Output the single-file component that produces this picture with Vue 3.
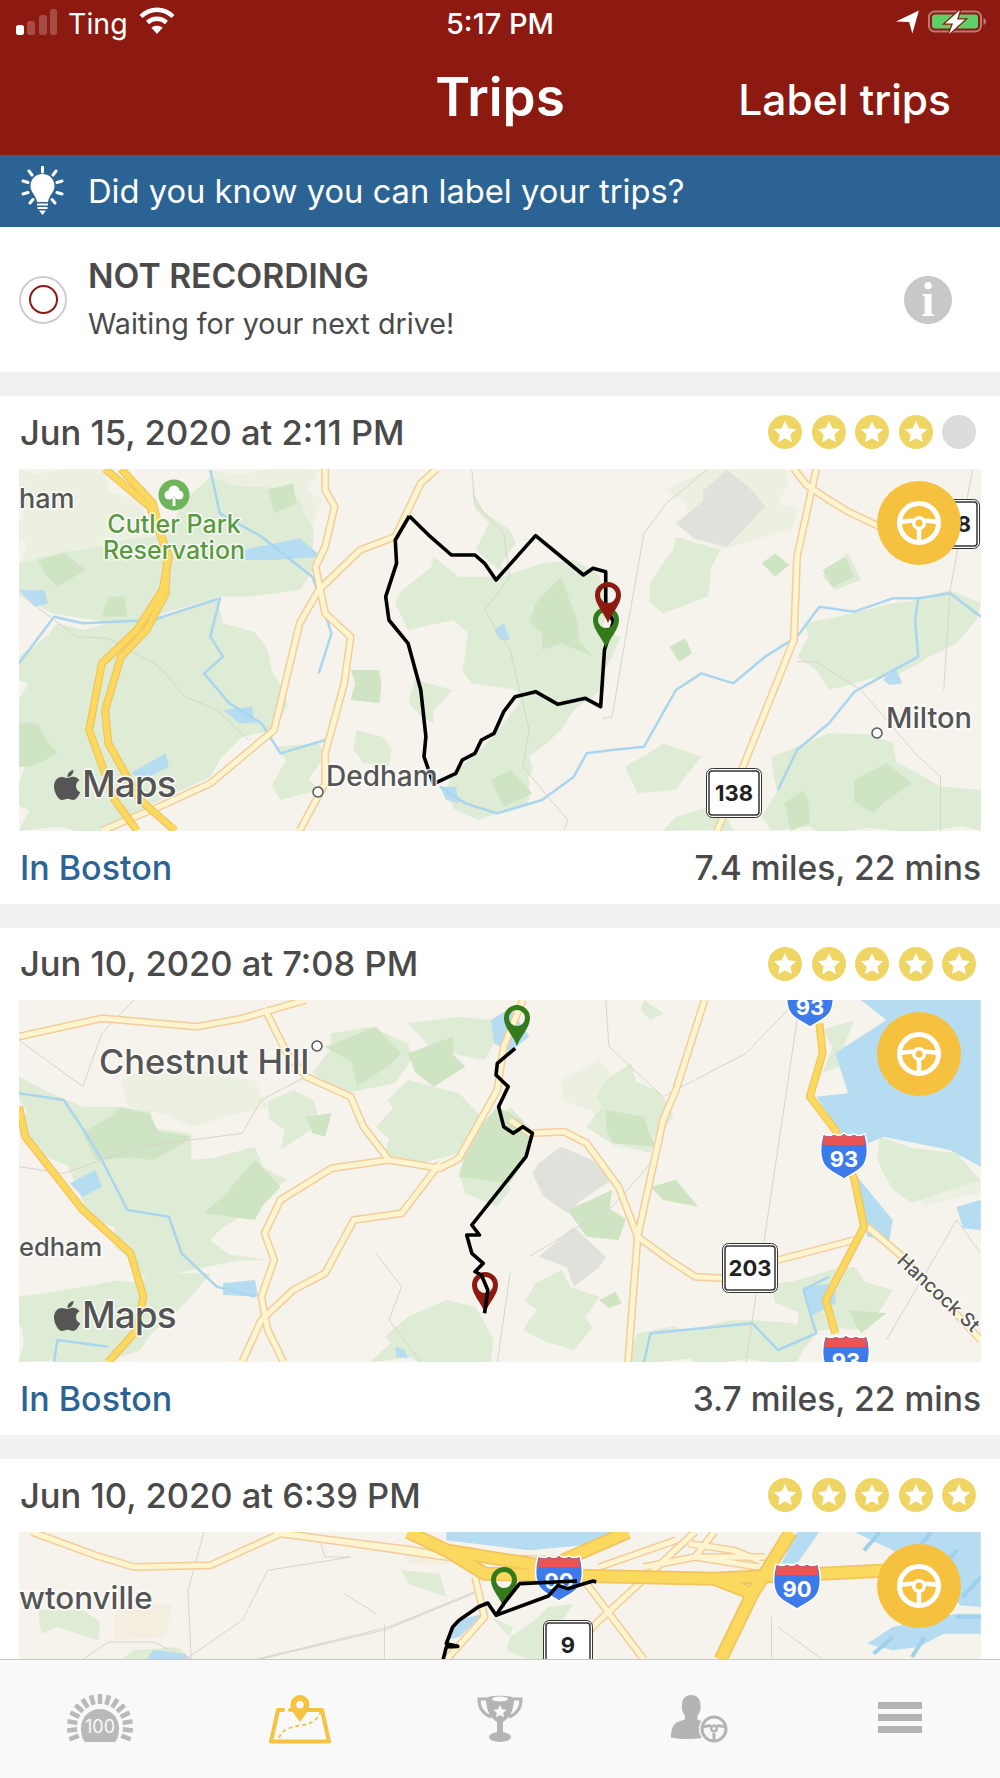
<script setup>
const gaugeRays = Array.from({ length: 15 }, (_, i) => {
  const a = ((-112 + i * 16) * Math.PI) / 180
  return {
    x1: 34 + 23 * Math.sin(a),
    y1: 33 - 23 * Math.cos(a),
    x2: 34 + 33 * Math.sin(a),
    y2: 33 - 33 * Math.cos(a)
  }
})

// map shapes are noted in crop units (x 30-1538), the svg group scales them down
const trips = [
  {
    date: 'Jun 15, 2020 at 2:11 PM',
    stars: 4,
    stats: '7.4 miles, 22 mins',
    map: {
      baseY: 237,
      pale: [
        '30,237 165,237 230,400 240,440 130,480 30,520',
        '330,240 500,240 490,440 400,420 360,340',
        '1040,300 1110,237 1230,237 1240,420 1130,480'
      ],
      green: [
        '30,800 90,700 130,720 190,690 250,680 340,620 350,700 420,780 445,900 430,1020 380,1040 330,1160 230,1250 180,1322 30,1322',
        '30,520 130,480 240,440 330,260 470,330 490,480 470,600 340,620 240,680 150,690 80,670 30,610',
        '620,640 680,500 720,560 790,560 850,520 900,510 950,620 960,800 950,890 900,960 880,1020 830,1100 830,1240 750,1290 700,1200 740,1100 790,1000 810,900 740,880 730,790 710,690 640,720',
        '1210,1100 1300,1030 1400,1060 1440,1150 1538,1200 1538,1322 1210,1322',
        '1020,580 1060,440 1130,480 1110,620 1040,670',
        '1260,700 1400,640 1490,600 1538,640 1500,760 1400,860 1300,900 1250,800',
        '560,1020 600,1040 610,1130 570,1120',
        '750,1170 800,1130 830,1230 770,1250',
        '740,300 800,420 800,560 770,520',
        '650,870 710,900 680,1000 660,980',
        '1290,560 1330,490 1350,570 1310,600',
        '980,1130 1040,1060 1100,1100 1060,1200 1000,1210',
        '430,1070 500,1060 500,1200 440,1230',
        '1060,1280 1130,1240 1150,1322 1040,1322'
      ],
      deep: [
        '840,640 880,560 895,640 930,800 880,760 850,780',
        '1050,770 1075,745 1085,790 1065,815',
        '1195,520 1215,490 1238,525 1215,560',
        '30,1000 60,1000 90,1090 50,1130 30,1130',
        '550,840 595,840 595,940 550,930',
        '60,510 100,490 135,540 90,590 70,550',
        '420,300 460,280 465,340 430,370',
        '170,620 195,620 200,680 160,680',
        '770,1170 800,1140 835,1210 790,1250',
        '1340,1170 1390,1120 1430,1180 1370,1270',
        '1230,1240 1260,1200 1270,1300 1240,1322',
        '1290,540 1325,500 1340,560 1305,590'
      ],
      gray: ['1060,400 1140,240 1200,350 1140,470'],
      water: [
        '380,480 470,445 505,500 430,510 385,510',
        '775,720 790,700 800,750 785,750',
        '690,1190 715,1190 720,1240 700,1230',
        '1385,870 1405,835 1415,880 1395,885',
        '350,960 395,950 400,1000 375,1000',
        '205,1150 260,1090 265,1130 225,1170',
        '30,600 70,600 75,640 55,650'
      ],
      rivers: [
        '1538,680 1490,610 1440,625 1400,625 1340,665 1285,650 1250,740 1200,800 1150,880 1100,850 1060,900 1010,1070 960,1080 920,1090 900,1160 850,1230 780,1270 730,1240 690,1190',
        '30,820 85,680 130,700 240,690 345,625 330,740 350,800 320,850 360,940 410,1000 440,1090 510,1050',
        '330,240 345,370 410,440 490,560 520,730 500,850',
        '1440,625 1435,690 1440,800 1340,905 1300,1000 1250,1080 1220,1200'
      ],
      minor: [
        '740,240 745,340 790,430 800,560 760,660 800,780 830,1020 820,1130 890,1290 885,1322',
        '1110,237 1045,340 1010,430 985,700 960,980 945,985',
        '30,610 120,740 170,745 250,830 290,920 340,960 390,1050',
        '1250,815 1280,815 1350,900 1440,1100 1475,1160 1475,1322',
        '1525,240 1490,600 1480,900'
      ],
      arterial: [
        '685,237 660,280 620,440 565,480 500,600 470,700 430,1020 330,1180 250,1250 160,1322',
        '510,237 510,300 525,350 510,470 495,530 510,670 550,740 540,880 510,1090 510,1180 470,1322',
        '1245,237 1265,285 1300,330 1330,365 1380,410',
        '1280,237 1250,500 1245,750 1180,1060 1125,1322'
      ],
      highway: [
        '165,237 235,350 265,500 255,600 215,720 160,820 140,1020 180,1230 215,1322',
        '190,237 240,340 262,500 260,610 230,720 190,800 165,960 170,1060 220,1230 275,1322'
      ],
      route: '642,378 675,440 708,495 745,495 760,520 778,570 840,437 915,555 930,535 950,545 950,650 962,695 948,780 942,950 918,925 875,943 840,905 808,920 790,965 775,1030 755,1050 745,1090 725,1110 715,1150 680,1182 665,1100 668,1040 660,900 640,760 610,690 605,620 622,520 620,450 642,378'
    },
    labels: [
      { text: 'ham', x: 0, y: 39, size: 27 },
      { text: 'Dedham', x: 307, y: 317, size: 28 },
      { text: 'Milton', x: 867, y: 259, size: 29 }
    ],
    parks: [
      { text: 'Cutler Park', x: 155, y: 64 },
      { text: 'Reservation', x: 155, y: 90 }
    ],
    tree: true,
    dots: [{ x: 299, y: 323 }, { x: 858, y: 264 }],
    boxes: [
      { text: '138', x: 687, y: 299 },
      { text: '138', x: 905, y: 30 }
    ],
    interstates: [],
    pins: [
      { x: 587, y: 138, color: '#337a1c' },
      { x: 589, y: 113, color: '#8c1a10' }
    ]
  },
  {
    date: 'Jun 10, 2020 at 7:08 PM',
    stars: 5,
    stats: '3.7 miles, 22 mins',
    map: {
      baseY: 240,
      pale: [
        '190,480 240,440 400,480 420,560 300,620 200,560',
        '880,480 940,420 1000,560 1030,700 960,680',
        '1440,760 1538,780 1538,820 1450,860'
      ],
      green: [
        '30,470 130,560 180,560 300,640 300,720 400,680 450,780 330,960 420,1020 300,1050 230,1080 180,980 120,800 60,700 30,640',
        '520,340 580,320 640,370 620,490 540,520 490,460',
        '590,620 640,480 720,520 760,600 720,700 640,740 600,720',
        '720,760 800,560 840,640 820,720 780,860 730,820',
        '950,480 990,430 1050,560 1020,700 950,660 920,620',
        '30,1130 130,1100 270,1060 330,1060 280,1170 220,1290 170,1326 30,1326',
        '580,1326 640,1190 700,1140 760,1210 770,1326',
        '840,1090 880,1050 940,1130 900,1290 820,1230',
        '1210,1090 1340,1040 1400,1110 1360,1230 1250,1240',
        '1000,1240 1180,1200 1280,1240 1250,1326 980,1326',
        '1380,650 1500,700 1538,780 1430,850 1385,760',
        '640,310 720,290 770,300 760,420 680,390',
        '420,545 460,510 500,600 440,690',
        '1010,240 1040,280 1020,300 1005,270',
        '1290,330 1340,300 1340,420 1290,460'
      ],
      deep: [
        '130,640 190,560 300,650 240,720 150,720',
        '320,880 400,720 440,800 400,900',
        '1020,800 1060,780 1095,860 1040,840',
        '940,1140 965,1115 975,1150 955,1165',
        '640,400 710,350 730,440 680,500',
        '510,380 590,320 630,400 560,500',
        '480,590 520,580 510,650 490,640',
        '890,870 960,810 970,960 920,950',
        '950,570 1010,590 1030,680 960,670',
        '730,700 780,560 830,660 800,790 720,770',
        '1330,1170 1390,1180 1350,1240'
      ],
      gray: [
        '835,760 880,680 960,780 890,880',
        '845,1010 900,920 950,1010 900,1100'
      ],
      water: [
        '1350,240 1538,240 1538,740 1490,690 1385,650 1350,680 1340,760 1370,830 1400,900 1395,960 1360,950 1340,790 1320,640 1280,530 1330,520 1310,400 1390,300',
        '770,300 800,265 830,350 800,395 775,370',
        '110,790 150,750 160,800 130,830',
        '1500,860 1538,840 1538,930 1510,925',
        '620,1280 635,1290 640,1315 622,1310',
        '350,1090 400,1080 405,1130 350,1125',
        '1260,1100 1310,1090 1310,1150 1270,1190'
      ],
      rivers: [
        '30,520 100,540 135,640 160,720 200,870 265,890 285,1000 340,1100 400,1130',
        '1010,1326 1020,1240 1180,1210 1220,1290 1280,1240 1260,1110 1300,1070',
        '85,1326 90,1260 170,1280'
      ],
      minor: [
        '30,360 130,500 160,340 210,240',
        '590,1000 630,1100 610,1200 660,1326',
        '950,240 955,380 1040,530 1170,400 1240,260',
        '830,1010 960,860 1030,710',
        '1250,300 1170,1326',
        '800,1060 780,1326',
        '1390,1260 1500,900 1538,1000',
        '30,740 100,760 220,680 300,660 380,640 410,540 480,470'
      ],
      arterial: [
        '30,350 160,295 310,320 380,295 480,240',
        '415,265 450,400 480,470 550,530 570,620 610,720 690,745 720,715 780,510 790,380 820,240',
        '610,720 520,745 440,840 415,940 430,1020 410,1130 420,1230 445,1326',
        '690,730 630,880 555,900 510,1060 460,1110 410,1200 380,1326',
        '800,600 830,640 885,635 920,670 970,800 1000,950 1050,1020 1090,1070 1135,1075',
        '1220,1020 1340,960',
        '1105,240 1060,510 1040,600 1000,950 985,1326',
        '1360,920 1415,1010 1538,1260'
      ],
      highway: [
        '30,560 40,650 130,870 205,1000 225,1130 215,1230 170,1326',
        '1285,310 1290,400 1270,530 1310,630 1340,780 1355,920 1295,1140 1310,1240'
      ],
      route: '808,385 780,430 778,465 797,500 782,560 790,620 805,640 820,620 835,640 825,710 740,915 752,945 732,945 740,1000 758,1030 745,1055 755,1065 765,1110 760,1180'
    },
    labels: [
      { text: 'Chestnut Hill', x: 80, y: 74, size: 34.400 },
      { text: 'edham', x: 0, y: 256, size: 25.500 }
    ],
    parks: [],
    dots: [{ x: 298, y: 46 }],
    boxes: [{ text: '203', x: 703, y: 243 }],
    interstates: [
      { text: '93', x: 791, y: -22 },
      { text: '93', x: 825, y: 130 },
      { text: '93', x: 827, y: 332 }
    ],
    pins: [
      { x: 498, y: 5, color: '#337a1c' },
      { x: 466, y: 272, color: '#8c1a10' }
    ],
    street: true,
    routeOnTop: true
  },
  {
    date: 'Jun 10, 2020 at 6:39 PM',
    stars: 5,
    stats: '',
    map: {
      baseY: 245,
      wide: true,
      sand: ['180,470 270,460 260,560 180,570', '630,300 720,320 700,345 640,340'],
      green: [
        '60,480 130,480 155,570 90,530 65,550',
        '630,360 690,370 700,440 640,400',
        '770,500 800,560 860,470 900,460 870,628 830,628',
        '210,600 280,590 300,628 190,628'
      ],
      water: [
        '700,245 985,245 940,280 830,300 700,270',
        '1250,245 1285,245 1250,340 1225,340',
        '1340,245 1538,245 1538,470 1505,465 1490,420 1440,360 1400,300',
        '1500,490 1538,490 1538,550 1480,550 1440,590 1400,600 1360,580 1400,530',
        '715,510 760,490 720,560 700,570',
        '240,600 290,610 300,628 230,628'
      ],
      docks: [
        '1355,300 1380,245',
        '1420,340 1460,245',
        '1470,380 1500,300',
        '1510,440 1538,380',
        '1400,560 1370,610',
        '1450,560 1430,620',
        '1500,500 1538,500'
      ],
      rivers: [],
      minor: [
        '320,245 295,420 300,628',
        '500,260 510,320 550,320 420,360 380,510 290,628',
        '750,420 610,530 400,628',
        '745,428 605,538 395,632',
        '540,430 590,490',
        '130,628 170,575 240,575 300,628',
        '603,520 603,628',
        '1210,500 1210,628 1290,628 1220,530'
      ],
      arterial: [
        '50,245 150,315 210,350 330,345 440,250 650,300 760,340',
        '430,245 700,320 900,330',
        '745,380 760,500 700,628',
        '920,400 1010,628',
        '1090,245 940,510 880,628',
        '1010,350 1090,320 1200,320',
        '1120,245 1090,320 1190,350',
        '1080,280 1150,300 1190,330',
        '940,350 1060,270'
      ],
      highway: [
        '640,245 700,300 860,350 985,245',
        '700,300 760,370 1120,385 1180,430 1130,628',
        '1120,385 1400,360',
        '1240,245 1180,430'
      ],
      route: '695,628 700,590 718,588 700,580 710,530 720,510 750,470 765,458 778,495 860,437 875,405 890,415 930,392 935,395',
      route2: '778,495 790,460 815,400 905,392'
    },
    labels: [{ text: 'wtonville', x: 0, y: 77, size: 31.300 }],
    parks: [],
    dots: [],
    boxes: [{ text: '9', x: 524, y: 88, narrow: true }],
    interstates: [
      { text: '90', x: 540, y: 20 },
      { text: '90', x: 778, y: 28 }
    ],
    pins: [{ x: 485, y: 35, color: '#337a1c' }],
    routeOnTop: true
  }
]

function scaleFor(map) {
  return `scale(0.63776 0.33333) translate(-30 ${-map.baseY})`
}

// breaks long polygon edges so the parks get the jagged look of the map tiles
function rough(points) {
  const pts = points.split(' ').map((p) => p.split(',').map(Number))
  const out = []
  pts.forEach((a, i) => {
    const b = pts[(i + 1) % pts.length]
    out.push(a)
    const steps = Math.floor(Math.hypot(b[0] - a[0], b[1] - a[1]) / 45)
    for (let s = 1; s < steps; s++) {
      const t = s / steps
      const wobble = Math.sin(a[0] * 0.7 + a[1] * 1.3 + s * 2.4)
      out.push([a[0] + (b[0] - a[0]) * t + wobble * 16, a[1] + (b[1] - a[1]) * t - wobble * 14])
    }
  })
  return out.map((p) => p.join(',')).join(' ')
}
</script>

<template>
  <div class="phone">
    <header class="topbar">
      <div class="status">
        <div class="status-left">
          <svg class="signal" width="44" height="28" viewBox="0 0 44 28">
            <rect x="0" y="16" width="8" height="10" rx="2.5" fill="#fff" />
            <rect x="11" y="12" width="8" height="14" rx="2.5" fill="#fff" opacity="0.22" />
            <rect x="23" y="6" width="8" height="20" rx="2.5" fill="#fff" opacity="0.22" />
            <rect x="34" y="0" width="7" height="26" rx="2.5" fill="#fff" opacity="0.22" />
          </svg>
          <span class="carrier">Ting</span>
          <svg class="wifi" width="38" height="27" viewBox="0 0 38 27" fill="none" stroke="#fff" stroke-width="4.4">
            <path d="M3 9.5C12.5 0.5 25.5 0.5 35 9.5" />
            <path d="M9.5 15.5C15 10.5 23 10.5 28.5 15.5" />
            <path d="M19 27l-5.6-6.2c3.2-2.6 8-2.6 11.2 0z" fill="#fff" stroke="none" />
          </svg>
        </div>
        <span class="clock">5:17 PM</span>
        <div class="status-right">
          <svg width="24" height="24" viewBox="0 0 22 22"><path d="M0 10.5L21 0.5 15 21.5 12 11z" fill="#fff" /></svg>
          <svg width="60" height="24" viewBox="0 0 60 24">
            <rect x="1" y="1.5" width="52" height="20" rx="5.5" fill="none" stroke="#fff" stroke-opacity="0.42" stroke-width="2" />
            <rect x="4" y="4.5" width="46" height="14" rx="3" fill="#5fd068" />
            <path d="M55.5 8v7c1.6-.6 2.6-2 2.6-3.5S57.100 8.600 55.500 8z" fill="#fff" fill-opacity="0.42" />
            <path d="M32 0L17 13.500h8L21 24 37 9.500h-8z" fill="#fff" stroke="#8c1a10" stroke-width="2.500" paint-order="stroke" />
          </svg>
        </div>
      </div>
      <div class="navbar">
        <h1 class="title">Trips</h1>
        <span class="nav-action">Label trips</span>
      </div>
    </header>

    <div class="tip">
      <svg class="bulb" width="44" height="50" viewBox="0 0 44 50">
        <g stroke="#fff" stroke-width="3" stroke-linecap="round">
          <path d="M21.500 1v5M8 5l3 4M35 5l-3 4M2 15l5 1.500M41 15l-5 1.500M2 28l5-1.500M41 28l-5-1.500M9 37l3-3.500M34 37l-3-3.500" />
        </g>
        <path d="M21.500 8C14.500 8 9.500 13.500 9.500 20c0 6.500 5.500 9 6.500 16h11c1-7 6.500-9.500 6.500-16 0-6.500-5-12-12-12z" fill="#fff" />
        <path d="M16 38.500h11M16.500 42h10" stroke="#fff" stroke-width="2.200" />
        <path d="M18 44.500h7L21.500 49z" fill="#fff" />
      </svg>
      <span>Did you know you can label your trips?</span>
    </div>

    <section class="recording">
      <div class="radio"><div class="radio-dot"></div></div>
      <div class="recording-text">
        <div class="recording-title">NOT RECORDING</div>
        <div class="recording-sub">Waiting for your next drive!</div>
      </div>
      <div class="info">i</div>
    </section>

    <main class="trip-list">
      <article v-for="trip in trips" :key="trip.date" class="trip">
        <div class="trip-head">
          <span class="trip-date">{{ trip.date }}</span>
          <div class="stars">
            <span v-for="n in 5" :key="n" class="star" :class="{ off: n > trip.stars }">
              <svg v-if="n <= trip.stars" width="24" height="24" viewBox="0 0 24 24">
                <path d="M12 1l3.300 7.300 7.900.9-5.900 5.300 1.600 7.800-6.900-4-6.900 4 1.600-7.800L.8 9.200l7.900-.9z" fill="#fff" />
              </svg>
            </span>
          </div>
        </div>

        <div class="map">
          <svg class="map-art" width="962" height="362" viewBox="0 0 962 362">
            <g :transform="scaleFor(trip.map)" :class="{ wide: trip.map.wide }">
              <polygon v-for="p in trip.map.sand" :key="p" :points="p" fill="#f3eee0" />
              <polygon v-for="p in trip.map.pale" :key="p" :points="rough(p)" fill="#ebf0e0" />
              <polygon v-for="p in trip.map.green" :key="p" :points="rough(p)" fill="#deebd5" />
              <polygon v-for="p in trip.map.deep" :key="p" :points="rough(p)" fill="#cfe4c3" />
              <polygon v-for="p in trip.map.gray" :key="p" :points="rough(p)" fill="#dfe1da" />
              <polygon v-for="p in trip.map.water" :key="p" :points="p" fill="#b5dcf0" />
              <polyline v-for="p in trip.map.docks" :key="p" :points="p" class="line dock" />
              <polyline v-for="p in trip.map.rivers" :key="p" :points="p" class="line river" />
              <polyline v-for="p in trip.map.minor" :key="p" :points="p" class="line minor" />
              <polyline v-for="p in trip.map.arterial" :key="p" :points="p" class="line art-case" />
              <polyline v-for="p in trip.map.arterial" :key="p + 'f'" :points="p" class="line art-fill" />
              <polyline v-for="p in trip.map.highway" :key="p" :points="p" class="line hw-case" />
              <polyline v-for="p in trip.map.highway" :key="p + 'f'" :points="p" class="line hw-fill" />
              <polyline v-if="!trip.routeOnTop" :points="trip.map.route" class="line route" />
            </g>

            <g v-for="s in trip.interstates" :key="s.x" :transform="`translate(${s.x - 24} ${s.y})`">
              <path d="M3 4c4 2 8 2 11 0 4 2 7 2 10-1 3 3 6 3 10 1 3 2 7 2 11 0 3 10 4 24-2 32-5 6-13 9-19 13-6-4-14-7-19-13C-1 28 0 14 3 4z" fill="#3d7bea" stroke="#fff" stroke-width="1.500" />
              <path d="M4 5c4 2 7 2 10 0 4 2 7 2 10-1 3 3 6 3 10 1 3 2 6 2 10 0l1.500 10H2.500z" fill="#ea5454" />
              <text x="24" y="37" class="shield-text">{{ s.text }}</text>
            </g>

            <g v-for="b in trip.boxes" :key="b.x" :transform="`translate(${b.x} ${b.y})`">
              <rect x="0.500" y="0.500" :width="b.narrow ? 49 : 55" height="49" rx="6" fill="#fff" stroke="#333" stroke-width="1" />
              <rect x="3" y="3" :width="b.narrow ? 44 : 50" height="44" rx="3" fill="#fff" stroke="#333" stroke-width="1.500" />
              <text :x="b.narrow ? 25 : 28" y="33" class="box-text">{{ b.text }}</text>
            </g>

            <g v-if="trip.tree" transform="translate(155 26)">
              <ellipse rx="15.500" ry="15.500" fill="#6fb45b" />
              <circle cy="-4" r="5.500" fill="#fff" />
              <circle cx="-5" cy="0" r="4.500" fill="#fff" />
              <circle cx="5" cy="0" r="4.500" fill="#fff" />
              <path d="M-1.500 11V2h3v9z" fill="#fff" />
            </g>

            <circle v-for="d in trip.dots" :key="d.x" :cx="d.x" :cy="d.y" r="5" fill="#fff" stroke="#555" stroke-width="1.500" />
            <text v-for="l in trip.labels" :key="l.text" :x="l.x" :y="l.y" :font-size="l.size" class="map-label">{{ l.text }}</text>
            <text v-for="l in trip.parks" :key="l.text" :x="l.x" :y="l.y" class="park-label">{{ l.text }}</text>
            <text v-if="trip.street" transform="translate(877 262) rotate(43)" class="street-label">Hancock St</text>

            <g v-for="pin in trip.pins" :key="pin.x" :transform="`translate(${pin.x - 13} ${pin.y})`">
              <path d="M13 0a13 13 0 0 1 13 13c0 10-9 17-13 28C9 30 0 23 0 13A13 13 0 0 1 13 0zm0 5a8 8 0 1 0 0 16 8 8 0 0 0 0-16z" :fill="pin.color" fill-rule="evenodd" />
            </g>

            <g v-if="trip.routeOnTop" :transform="scaleFor(trip.map)">
              <polyline :points="trip.map.route" class="line route" />
              <polyline v-if="trip.map.route2" :points="trip.map.route2" class="line route" />
            </g>

            <g transform="translate(35 301)">
              <path d="M19.500 0c.3 3.500-2.800 7-6 7-.4-3.400 2.900-6.700 6-7zM13 8c2 0 3.500-1.300 6-1.300 2.600 0 5 1.400 6.400 3.600-5 3-4.200 10 .8 12-1.500 3.700-4.200 7.700-7 7.700-2 0-3-1.300-5.500-1.300S10 30 8 30C4.200 30 0 22 0 16.500 0 11 3.500 7 7.500 7c2.200 0 4 1 5.500 1z" fill="#555" />
            </g>
            <text x="63" y="328" class="maps-word">Maps</text>
          </svg>
          <button class="drive-btn">
            <svg width="48" height="48" viewBox="0 0 48 48" fill="none" stroke="#fff">
              <circle cx="24" cy="24" r="19.500" stroke-width="5" />
              <path d="M6 23c6-1 10-2 13-1M42 23c-6-1-10-2-13-1M24 30v13" stroke-width="4.500" />
              <circle cx="24" cy="24" r="7" fill="#fff" stroke="none" />
              <circle cx="24" cy="24" r="3.500" fill="#f5c13f" stroke="none" />
            </svg>
          </button>
        </div>

        <div class="trip-foot">
          <span class="place">In Boston</span>
          <span class="stats">{{ trip.stats }}</span>
        </div>
      </article>
    </main>

    <nav class="tabbar">
      <div class="tab">
        <svg width="68" height="52" viewBox="0 0 68 52">
          <line v-for="(r, i) in gaugeRays" :key="i" :x1="r.x1" :y1="r.y1" :x2="r.x2" :y2="r.y2" stroke="#b9b9b9" stroke-width="4.600" />
          <path d="M19 48c-3-3-4-9-4-14a19 19 0 0 1 38 0c0 5-1 11-4 14z" fill="#b9b9b9" />
          <text x="34" y="39" class="gauge-text">100</text>
        </svg>
      </div>
      <div class="tab">
        <svg width="64" height="52" viewBox="0 0 64 52">
          <path d="M15 16h-5L3 47.500h58L54 16h-15M24 16h-2" fill="none" stroke="#f5c242" stroke-width="4" stroke-linejoin="round" stroke-linecap="round" />
          <path d="M11 44c3-8 9-10 18-12 9-1.500 19-2 24-15" fill="none" stroke="#f5c242" stroke-width="1.800" stroke-dasharray="4 3" />
          <path d="M32 1a9.500 9.500 0 0 1 9.500 9.500C41.500 17 36 22 32 28c-4-6-9.500-11-9.500-17.500A9.500 9.500 0 0 1 32 1zm0 6a3.800 3.800 0 1 0 0 7.600 3.800 3.800 0 0 0 0-7.600z" fill="#f5c242" fill-rule="evenodd" />
        </svg>
      </div>
      <div class="tab">
        <svg width="46" height="48" viewBox="0 0 46 48">
          <path d="M9 5H2c0 9 4 15 12 18M37 5h7c0 9-4 15-12 18" fill="none" stroke="#b4b4b4" stroke-width="3" />
          <path d="M9 4c3-3 25-3 28 0 0 12-4 20-11 24v11h-6V28C13 24 9 16 9 4z" fill="#b4b4b4" />
          <ellipse cx="23" cy="43" rx="11" ry="5" fill="#b4b4b4" />
          <ellipse cx="23" cy="5" rx="8" ry="2.500" fill="#f9f9f9" />
          <path d="M23 11l2 4.300 4.500.5-3.300 3 .9 4.500-4.100-2.300-4.100 2.300.9-4.500-3.300-3 4.500-.5z" fill="#f9f9f9" />
        </svg>
      </div>
      <div class="tab">
        <svg width="60" height="50" viewBox="0 0 60 50">
          <path d="M21 1c6 0 9.500 4 9.500 10 0 3 .5 4-.5 6-.8 2-1.500 3.500-2.500 4.500v4c3 1.500 7 2.500 9 4C32 33 30 40 32 44 21 46 10 45 1 43.500c0-7 1.500-12 5-14.500 3-2 6-2.500 9-3.500v-4c-1-1-1.700-2.500-2.500-4.500-1-2-.5-3-.5-6 0-6 3.500-10 9-10z" fill="#b4b4b4" />
          <circle cx="44" cy="35" r="15" fill="#f9f9f9" />
          <g fill="none" stroke="#b4b4b4">
            <circle cx="44" cy="35" r="12" stroke-width="3" />
            <path d="M33 33c4-1 6-2 8-1M55 33c-4-1-6-2-8-1M44 39v8" stroke-width="3" />
          </g>
          <circle cx="44" cy="34.500" r="4" fill="#b4b4b4" />
          <circle cx="44" cy="34.500" r="1.600" fill="#f9f9f9" />
        </svg>
      </div>
      <div class="tab">
        <div class="menu-icon"><span></span><span></span><span></span></div>
      </div>
    </nav>
  </div>
</template>

<style scoped>
.phone {
  width: 1000px;
  height: 1778px;
  display: flex;
  flex-direction: column;
  overflow: hidden;
  background: #f1f1f1;
  font-family: Inter, "Noto Sans", sans-serif;
  color: #4a4a4a;
}

.topbar {
  flex: none;
  height: 155px;
  background: #8c1a10;
  color: #fff;
}

.status {
  height: 44px;
  padding: 0 12px 0 16px;
  display: flex;
  align-items: center;
  justify-content: space-between;
  position: relative;
}

.status-left {
  display: flex;
  align-items: center;
  gap: 8px;
}

.signal {
  margin-top: 1px;
}

.carrier {
  font-size: 28.5px;
  padding-top: 3px;
}

.clock {
  font-size: 29px;
  font-weight: 500;
  padding-top: 3px;
}

.wifi {
  margin-left: 2px;
  margin-top: -4px;
}

.clock {
  position: absolute;
  left: 0;
  right: 0;
  text-align: center;
  pointer-events: none;
}

.status-right {
  display: flex;
  align-items: center;
  gap: 8px;
}

.navbar {
  height: 111px;
  position: relative;
  display: flex;
  justify-content: center;
  padding-top: 19px;
  box-sizing: border-box;
}

.title {
  margin: 0;
  font-size: 53px;
  font-weight: 600;
  line-height: 68px;
}

.nav-action {
  position: absolute;
  right: 49px;
  top: 27px;
  font-size: 42.5px;
  font-weight: 500;
  line-height: 58px;
}

.tip {
  flex: none;
  height: 72px;
  background: #2b6494;
  color: #fff;
  display: flex;
  align-items: center;
  padding-left: 21px;
  gap: 23px;
  font-size: 32.7px;
  box-sizing: border-box;
}

.recording {
  flex: none;
  height: 145px;
  background: #fff;
  display: flex;
  align-items: center;
  padding: 0 48px 0 19px;
  box-sizing: border-box;
}

.radio {
  width: 48px;
  height: 48px;
  box-sizing: border-box;
  border: 2px solid #cdcdcd;
  border-radius: 50%;
  display: flex;
  align-items: center;
  justify-content: center;
}

.radio-dot {
  width: 29px;
  height: 29px;
  box-sizing: border-box;
  border: 2.5px solid #8c1a10;
  border-radius: 50%;
}

.recording-text {
  flex: 1;
  margin-left: 21px;
  padding-bottom: 2px;
}

.recording-title {
  font-size: 33.7px;
  font-weight: 600;
  line-height: 44px;
  margin-bottom: 6px;
}

.recording-sub {
  font-size: 28.7px;
  line-height: 40px;
}

.info {
  width: 48px;
  height: 48px;
  border-radius: 50%;
  background: #c8c8c8;
  color: #fff;
  font-family: "Liberation Serif", serif;
  font-size: 48px;
  font-weight: 700;
  line-height: 48px;
  text-align: center;
}

.trip-list {
  flex: 1;
  min-height: 0;
  overflow: hidden;
  padding-top: 24px;
}

.trip {
  background: #fff;
  padding: 0 19px;
  margin-bottom: 24px;
}

.trip-head {
  height: 72.5px;
  display: flex;
  align-items: center;
  justify-content: space-between;
}

.trip-date {
  font-size: 34.5px;
  font-weight: 500;
  padding-left: 1px;
}

.stars {
  display: flex;
  gap: 9.4px;
  padding-right: 5px;
}

.star {
  width: 34px;
  height: 34px;
  border-radius: 50%;
  background: #efd564;
  display: flex;
  align-items: center;
  justify-content: center;
}

.star.off {
  background: #dcdcdc;
}

.map {
  height: 362px;
  position: relative;
  background: #f6f3ec;
  overflow: hidden;
}

.map-art {
  display: block;
}

.line {
  fill: none;
  vector-effect: non-scaling-stroke;
  stroke-linejoin: round;
}

.dock {
  stroke: #9fd0ec;
  stroke-width: 4px;
}

.river {
  stroke: #a9d6ee;
  stroke-width: 2.5px;
}

.minor {
  stroke: #d6d4cc;
  stroke-width: 1px;
}

.art-case {
  stroke: #f3cd9c;
  stroke-width: 8px;
}

.art-fill {
  stroke: #fdf5cf;
  stroke-width: 5px;
}

.hw-case {
  stroke: #f2c45f;
  stroke-width: 8px;
}

.hw-fill {
  stroke: #fbd95f;
  stroke-width: 5.5px;
}

.wide .hw-case {
  stroke-width: 14px;
}

.wide .hw-fill {
  stroke-width: 10.5px;
}

.route {
  stroke: #000;
  stroke-width: 3.6px;
}

.map-label,
.park-label,
.street-label,
.maps-word {
  paint-order: stroke;
  stroke: rgba(255, 255, 255, 0.85);
  stroke-width: 3px;
  stroke-linejoin: round;
}

.map-label {
  font-weight: 500;
  fill: #555;
}

.park-label {
  font-size: 25px;
  font-weight: 500;
  fill: #5a9a3e;
  text-anchor: middle;
}

.street-label {
  font-size: 19px;
  font-weight: 500;
  fill: #555;
}

.maps-word {
  font-size: 37px;
  font-weight: 500;
  fill: #555;
  letter-spacing: -1px;
}

.shield-text {
  font-size: 22px;
  font-weight: 700;
  fill: #fff;
  text-anchor: middle;
}

.box-text {
  font-size: 22px;
  font-weight: 700;
  fill: #222;
  text-anchor: middle;
}

.drive-btn {
  position: absolute;
  top: 12px;
  right: 20px;
  width: 84px;
  height: 84px;
  padding: 0;
  border: 0;
  border-radius: 50%;
  background: #f5c13f;
  display: flex;
  align-items: center;
  justify-content: center;
}

.trip-foot {
  height: 73px;
  display: flex;
  align-items: center;
  justify-content: space-between;
  font-weight: 500;
}

.place {
  color: #2b6494;
  font-size: 34px;
  padding-left: 1px;
}

.stats {
  font-size: 33.6px;
}

.tabbar {
  flex: none;
  height: 119px;
  box-sizing: border-box;
  background: #f9f9f9;
  border-top: 1px solid #c9c9c9;
  display: flex;
  padding-top: 34px;
}

.tab {
  flex: 1;
  display: flex;
  justify-content: center;
  align-items: flex-start;
}

.gauge-text {
  font-size: 18px;
  fill: #f9f9f9;
  text-anchor: middle;
}

.menu-icon {
  width: 44px;
  margin-top: 8px;
  display: flex;
  flex-direction: column;
  gap: 5px;
}

.menu-icon span {
  height: 7px;
  background: #b4b4b4;
}
</style>
